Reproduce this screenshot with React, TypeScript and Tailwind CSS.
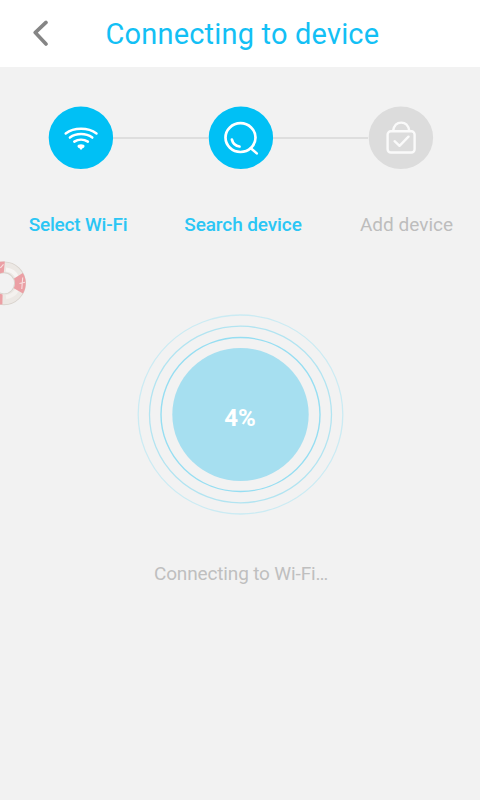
import type { ReactNode } from "react";

const steps = [
  { label: "Select Wi-Fi", icon: <WifiGlyph />, active: true, labelClass: "-translate-x-[2px] tracking-[-0.2px]" },
  { label: "Search device", icon: <SearchGlyph />, active: true, labelClass: "translate-x-[3px] tracking-[-0.1px]" },
  { label: "Add device", icon: <BagGlyph />, active: false, labelClass: "translate-x-[6.5px]" },
];

const rings = [
  { rx: 79.5, ry: 77, color: "#96def2", width: 1.4 },
  { rx: 91, ry: 88.3, color: "#b2e4f1", width: 1.3 },
  { rx: 102.3, ry: 99.5, color: "#cbebf3", width: 1.3 },
];

function WifiGlyph() {
  return (
    <g fill="none" stroke="#fff" strokeWidth="2.5" strokeLinecap="round">
      <path d="M17.2 27C25.5 20.8 39.5 20.8 48 27" />
      <path d="M21.4 31.2C27.7 26.5 37.3 26.5 43.8 31.2" />
      <path d="M25.8 35.2C29.7 32.6 35.3 32.6 39.4 35.2" />
      <path d="M29.3 40L32.5 43.6L35.8 40Z" fill="#fff" stroke="none" />
      <ellipse cx="32.5" cy="39.8" rx="3.5" ry="1.9" fill="#fff" stroke="none" />
    </g>
  );
}

function SearchGlyph() {
  return (
    <g fill="none" stroke="#fff" strokeWidth="2.7" strokeLinecap="round" strokeLinejoin="round">
      <ellipse cx="32" cy="31.2" rx="15" ry="14.4" />
      <path d="M42.3 41.8L48.3 47" strokeWidth="2.5" />
      <path d="M23.4 33.2C24.3 36.8 27.3 39.6 31 40.1" />
    </g>
  );
}

function BagGlyph() {
  return (
    <g fill="none" stroke="#fafafa" strokeWidth="2.4" strokeLinecap="round" strokeLinejoin="round">
      <rect x="19.1" y="24.9" width="27" height="21.2" rx="3.2" />
      <path d="M24.6 24.4C25.5 19 28.7 16.2 32.7 16.2C36.7 16.2 39.9 19 40.8 24.4" />
      <path d="M26.1 34.8L31 39.4L40 30.3" />
    </g>
  );
}

function StepCircle({ active, children }: { active: boolean; children: ReactNode }) {
  return (
    <svg className="h-[63px] w-[65px] shrink-0 overflow-visible" viewBox="-0.5 -0.4 65 63">
      <ellipse cx="32.4" cy="31.4" rx="32.2" ry="31.2" fill={active ? "#00c0f5" : "#dcdcdc"} />
      {children}
    </svg>
  );
}

function Lifebuoy() {
  return (
    <svg className="absolute left-0 top-[261px] h-[45px] w-[27px]" viewBox="0 0 27 45">
      <circle cx="4" cy="22.3" r="16" fill="none" stroke="#d9d3cd" strokeWidth="11.8" />
      <circle cx="4" cy="22.3" r="16" fill="none" stroke="#ece8e4" strokeWidth="10" />
      <path d="M6 8.6C11 9 15.4 12 17.4 17" fill="none" stroke="#f7f5f3" strokeWidth="4" />
      <path d="M6 36.2C11 35.4 15.4 32.4 17.2 28.4" fill="none" stroke="#f4f1ee" strokeWidth="4" />
      <path d="M0 0.8L4.8 0.6L3.8 11.6L0 12.2Z" fill="#eb9fa4" />
      <path d="M0 32.8L2.6 33.4L2.4 43.6L0 43.4Z" fill="#eb9fa4" />
      <path d="M14 17.4L22.8 12.1C26.6 17.6 26.8 26.5 23 32.5L13.8 27.2C15.4 24 15.4 20.6 14 17.4Z" fill="#eb9fa4" />
      <path d="M0.4 7L3.5 3.4M22.7 16.5L21.8 28M19.5 22.5L25 21.3" fill="none" stroke="#f8dfe0" strokeWidth="1.1" />
    </svg>
  );
}

export default function App() {
  return (
    <div className="relative flex h-[800px] w-[480px] flex-col overflow-hidden bg-[#f2f2f2] font-['Roboto',sans-serif]">
      <header className="flex h-[67px] shrink-0 items-center bg-white">
        <button className="flex h-full w-[105.5px] items-center pl-[32px]" aria-label="Back">
          <svg className="h-[28px] w-[18px]" viewBox="0 0 18 28">
            <path d="M14 2.4L3.2 12.6L14 24" fill="none" stroke="#858585" strokeWidth="3.6" strokeLinecap="round" strokeLinejoin="round" />
          </svg>
        </button>
        <h1 className="whitespace-nowrap text-[29px] leading-[34px] tracking-[0.18px] text-[#13c0f5]">
          Connecting to device
        </h1>
      </header>

      <div className="mt-[39px] flex shrink-0 items-center pl-[48px]">
        {steps.map((step, index) => (
          <div key={step.label} className="flex items-center">
            {index > 0 && <div className="h-[2px] w-[95px] bg-[#dedede]" />}
            <StepCircle active={step.active}>{step.icon}</StepCircle>
          </div>
        ))}
      </div>

      <div className="mt-[45px] grid shrink-0 grid-cols-3 text-center text-[19px] leading-[22px]">
        {steps.map((step) => (
          <span
            key={step.label}
            className={`whitespace-nowrap ${step.labelClass} ${
              step.active ? "font-medium text-[#2bc6f5]" : "text-[#bdbdbd]"
            }`}
          >
            {step.label}
          </span>
        ))}
      </div>

      {/* Progress */}
      <div className="mt-[76px] grid shrink-0 place-items-center">
        <svg className="col-start-1 row-start-1 h-[204px] w-[210px]" viewBox="0 0 210 204">
          {rings.map((ring) => (
            <ellipse
              key={ring.rx}
              cx="105.5"
              cy="102.5"
              rx={ring.rx}
              ry={ring.ry}
              fill="none"
              stroke={ring.color}
              strokeWidth={ring.width}
            />
          ))}
          <ellipse cx="105.5" cy="102.5" rx="68.2" ry="66.5" fill="#a6dff0" />
        </svg>
        <span className="col-start-1 row-start-1 pt-[8px] text-[24px] font-bold leading-[28px] text-white">
          4%
        </span>
      </div>

      <p className="mt-[47px] pl-[2px] text-center text-[19px] leading-[22px] tracking-[-0.15px] text-[#bfbfbf]">
        Connecting to Wi-Fi…
      </p>

      <Lifebuoy />
    </div>
  );
}
